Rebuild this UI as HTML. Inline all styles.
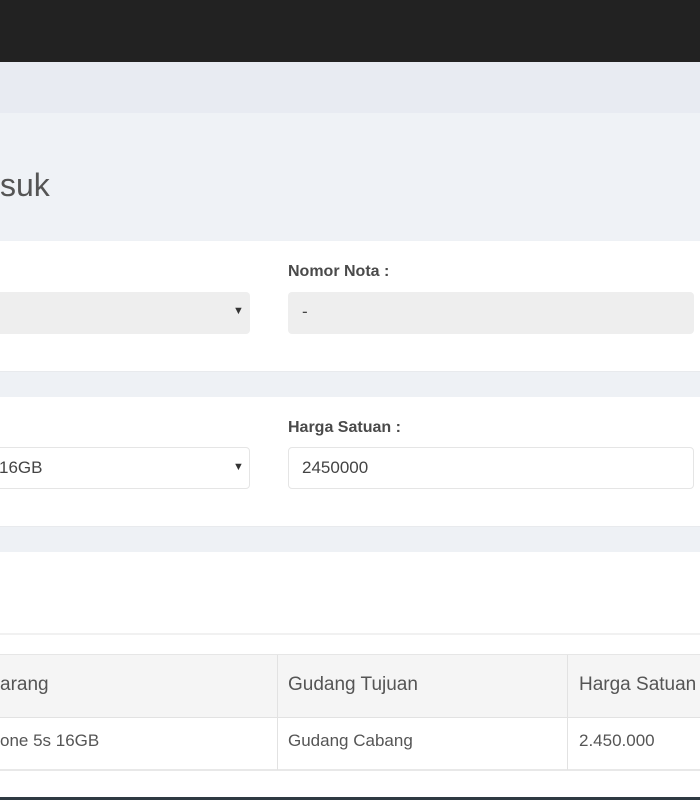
<!DOCTYPE html>
<html><head><meta charset="utf-8"><style>
*{margin:0;padding:0;box-sizing:border-box}
body{width:700px;height:800px;overflow:hidden;background:#eef1f5;font-family:"Liberation Sans",sans-serif;color:#555;position:relative}
.a{position:absolute}
.lbl{font-size:16px;font-weight:bold;color:#4a4a4a}
.box{border-radius:4px;font-size:17px;color:#444;padding-left:14px;line-height:40px}
.arrow{position:absolute;font-size:11px;color:#333}
</style></head><body>
<div class="a" style="left:0;top:0;width:700px;height:62px;background:#222"></div>
<div class="a" style="left:0;top:62px;width:700px;height:51px;background:#e8ebf2"></div>
<div class="a" style="left:0;top:113px;width:700px;height:127px;background:#eff2f6"></div>
<div class="a" style="left:0;top:165px;font-size:32px;color:#555;line-height:40px">suk</div>

<div class="a" style="left:0;top:241px;width:700px;height:131px;background:#fff;border-bottom:1px solid #e8eaed"></div>
<div class="a lbl" style="left:288px;top:263px">Nomor Nota :</div>
<div class="a box" style="left:-10px;top:292px;width:260px;height:42px;background:#eee"></div>
<div class="arrow" style="left:233px;top:305px">▼</div>
<div class="a box" style="left:288px;top:292px;width:406px;height:42px;background:#eee">-</div>

<div class="a" style="left:0;top:397px;width:700px;height:130px;background:#fff;border-bottom:1px solid #e8eaed"></div>
<div class="a lbl" style="left:288px;top:419px">Harga Satuan :</div>
<div class="a box" style="left:-10px;top:447px;width:260px;height:42px;background:#fff;border:1px solid #e5e5e5;padding-left:8px">16GB</div>
<div class="arrow" style="left:233px;top:461px">▼</div>
<div class="a box" style="left:288px;top:447px;width:406px;height:42px;background:#fff;border:1px solid #e5e5e5;padding-left:13px">2450000</div>

<div class="a" style="left:0;top:552px;width:700px;height:245px;background:#fff"></div>
<div class="a" style="left:0;top:633px;width:700px;height:2px;background:#f1f1f1"></div>
<div class="a" style="left:0;top:654px;width:700px;height:64px;background:#f5f5f5;border-top:1px solid #e6e6e6;border-bottom:1px solid #e2e2e2"></div>
<div class="a" style="left:0;top:769px;width:700px;height:2px;background:#e8e8e8"></div>
<div class="a" style="left:277px;top:655px;width:1px;height:115px;background:#e2e2e2"></div>
<div class="a" style="left:567px;top:655px;width:1px;height:115px;background:#e2e2e2"></div>
<div class="a" style="left:0;top:674px;font-size:19px;color:#555">arang</div>
<div class="a" style="left:288px;top:674px;font-size:19px;color:#555">Gudang Tujuan</div>
<div class="a" style="left:579px;top:674px;font-size:19px;color:#555;white-space:nowrap">Harga Satuan</div>
<div class="a" style="left:0;top:731px;font-size:17px;color:#555">one 5s 16GB</div>
<div class="a" style="left:288px;top:731px;font-size:17px;color:#555">Gudang Cabang</div>
<div class="a" style="left:579px;top:731px;font-size:17px;color:#555">2.450.000</div>
<div class="a" style="left:0;top:797px;width:700px;height:3px;background:#2f3a42"></div>
</body></html>
